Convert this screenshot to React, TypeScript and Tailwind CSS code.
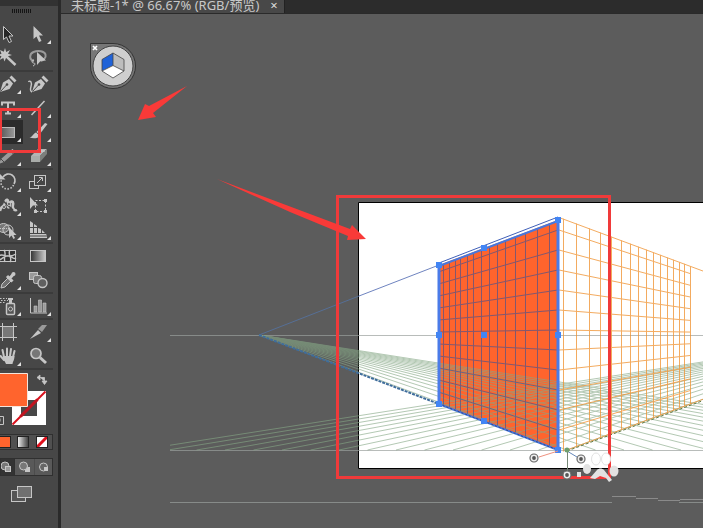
import { ReactNode } from "react"

interface Tool {
  name: string
  icon: ReactNode
  flyout?: boolean
  active?: boolean
}

const L = "#c6c6c6"
const M = "#9a9a9a"
const BG = "#474747"

// Every tool icon is drawn on a 30x24 grid
const toolGroups: Tool[][] = [
  [
    { name: "Selection", icon: <path d="M10.5 4.5v13l3-2.5 2.5 5.5 2.5-1-2.5-5.5h4z" fill="#262626" stroke={L} /> },
    { name: "Direct Selection", flyout: true, icon: <path d="M10.5 4v13l3-2.5 2.5 5.5 2.5-1-2.5-5.5h4z" fill={L} /> },
    {
      name: "Magic Wand",
      icon: (
        <>
          <path d="M12 2l1.200 4 3.800-2-2 3.800 4 1.200-4 1.200 1 3-3-1.200-1.500 3.500-1.200-3.500-3.800 2 2-3.800-3.500-1.200 3.500-1.200-1.500-3.800 3.800 1.800z" fill={L} />
          <path d="M14.5 11.5l8 7.5" stroke={L} strokeWidth="2.5" />
        </>
      ),
    },
    {
      name: "Lasso",
      icon: (
        <>
          <path d="M11 15c-5-1-5-7-.5-9 4.500-2 11-1 12 2.500 .8 3-2 5.500-5 6.500" fill="none" stroke={M} strokeWidth="2" />
          <path d="M11 14c-2.500 0-2.500 3-.5 3s2 2-.5 3" fill="none" stroke={L} />
          <path d="M14 6v13l3.500-4 5.500-.5z" fill={L} />
        </>
      ),
    },
  ],
  [
    {
      name: "Pen",
      flyout: true,
      icon: (
        <>
          <path d="M7 20l3-9.500 6-3.500 4 4.500-3.500 5.500z" fill={L} />
          <path d="M16.500 5.500l2-2 5 5-2 2z" fill={L} />
          <path d="M7.500 19.500l6-6.500" stroke={BG} />
          <circle cx="14" cy="12.500" r="1.300" fill={BG} />
        </>
      ),
    },
    {
      name: "Curvature",
      icon: (
        <>
          <path d="M9 20l3-9.500 6-3.500 4 4.500-3.500 5.500z" fill={L} />
          <path d="M18.500 5.500l2-2 5 5-2 2z" fill={L} />
          <path d="M9.500 19.500l6-6.500" stroke={BG} />
          <circle cx="16" cy="12.500" r="1.300" fill={BG} />
          <path d="M9 20c-4-2 1-7-1-10-.8-1.200-2-1.200-2.500 0" fill="none" stroke={L} strokeWidth="1.400" />
        </>
      ),
    },
    {
      name: "Type",
      flyout: true,
      icon: <path d="M9 9.500v-3h12v3M15 6.500v11M12 17.500h6" fill="none" stroke={L} strokeWidth="2" />,
    },
    { name: "Line Segment", flyout: true, icon: <path d="M8.500 19l13-14" stroke={L} strokeWidth="1.500" /> },
    {
      name: "Rectangle",
      flyout: true,
      active: true,
      icon: <rect x="6.500" y="7.500" width="15" height="10" fill="url(#toolShade)" stroke="#b9b9b9" />,
    },
    {
      name: "Paintbrush",
      flyout: true,
      icon: (
        <>
          <path d="M22 3l2.500 1-8 10.500-3-2.500z" fill={L} />
          <path d="M13 12.500l3.500 3c-1 3-6 3.500-10 2 3-.5 3.500-4 6.500-5z" fill={L} />
        </>
      ),
    },
    {
      name: "Pencil",
      flyout: true,
      icon: (
        <>
          <path d="M6 20l2-5 9-8 3 3-9 8z" fill={M} />
          <path d="M17.500 6.500l2-1.500 2.500 2.500-1.500 2z" fill={L} />
          <path d="M8 15l3 3" stroke={BG} />
        </>
      ),
    },
    {
      name: "Eraser",
      flyout: true,
      icon: (
        <>
          <path d="M8 12l7-7h9l-7 7z" fill="#b4b4b4" />
          <path d="M8 12h9v6H8z" fill="#a9aca9" />
          <path d="M17 12l7-7v5l-7 8z" fill="#7c7f7c" />
          <path d="M12 8l1-1h9" stroke="#d5d5d5" fill="none" />
        </>
      ),
    },
  ],
  [
    {
      name: "Rotate",
      flyout: true,
      icon: (
        <>
          <path d="M10 7a6.500 6.500 0 0 1 11 7" fill="none" stroke={L} strokeWidth="1.600" />
          <path d="M20.500 15a6.500 6.500 0 0 1-12-5" fill="none" stroke={L} strokeWidth="1.600" strokeDasharray="1.500 1.500" />
          <path d="M7 4v5.500h5.500z" fill={L} />
        </>
      ),
    },
    {
      name: "Scale",
      flyout: true,
      icon: (
        <>
          <rect x="6.500" y="11.500" width="9" height="7" fill="none" stroke={L} />
          <rect x="11.500" y="5.500" width="11" height="10" fill={BG} stroke={L} />
          <path d="M14 13l5-5M16 7.500h3.500V11" fill="none" stroke={L} />
        </>
      ),
    },
    {
      name: "Width",
      flyout: true,
      icon: (
        <>
          <path d="M7 17c1-6 4-3 5-8s4-4 3 1 2 4 2 0 4-3 3 1 2 6 4 5" fill="none" stroke={L} strokeWidth="2.500" />
          <path d="M8 5l12 11" stroke={BG} strokeWidth="1.500" />
          <circle cx="11" cy="13" r="1.500" fill={BG} stroke={L} />
          <circle cx="16" cy="10" r="1.500" fill={BG} stroke={L} />
        </>
      ),
    },
    {
      name: "Free Transform",
      icon: (
        <>
          <path d="M7 3v12l3-3.500h5z" fill={L} />
          <rect x="12.500" y="6.500" width="10" height="11" fill="none" stroke={L} strokeDasharray="2 1.500" />
          <path d="M11 16h3v3h-3zM21 5h3v3h-3zM21 16h3v3h-3z" fill={L} />
        </>
      ),
    },
    {
      name: "Shape Builder",
      flyout: true,
      icon: (
        <>
          <ellipse cx="10.500" cy="10" rx="5.500" ry="4.500" fill="#777" stroke={L} />
          <ellipse cx="15" cy="12" rx="5" ry="5" fill="none" stroke={L} />
          <path d="M7 10.500h9" stroke={L} strokeDasharray="1 1" />
          <path d="M16 9v11l2.500-2.500 2 3.500 1.500-1-1.500-3h3z" fill={L} />
        </>
      ),
    },
    {
      name: "Perspective Grid",
      flyout: true,
      icon: (
        <>
          <path d="M7 3l3 2v10H7zM11 6l3 2v7h-3zM15 10l3 1v4h-3zM19 12l3 3h-3z" fill={L} />
          <path d="M7 16h16l1 1.500H7zM7 18.500h17v1.500H7z" fill={L} />
          <path d="M7 9.500h8" stroke={BG} />
        </>
      ),
    },
  ],
  [
    {
      name: "Mesh",
      icon: (
        <>
          <rect x="6.500" y="6.500" width="16" height="11" fill="#333" stroke={L} />
          <path d="M6 12c4-4 7 4 17-2M11 6c3 4-1 8 1 12M17 6c-3 5 3 8 0 12M6 16c4-1 5-5 10-4s4 4 7 2" fill="none" stroke={L} strokeWidth="1.400" />
        </>
      ),
    },
    { name: "Gradient", icon: <rect x="7.500" y="6.500" width="15" height="11" fill="url(#toolGradient)" stroke={L} /> },
    {
      name: "Eyedropper",
      flyout: true,
      icon: (
        <>
          <path d="M8 20l1-4 7-7 3 3-7 7z" fill="#707070" stroke={L} />
          <path d="M14 8l5.500 5.500M17 10l3.500-4" stroke={L} strokeWidth="3" />
          <circle cx="20.500" cy="6" r="2" fill={L} />
        </>
      ),
    },
    {
      name: "Blend",
      icon: (
        <>
          <rect x="6.500" y="4.500" width="8" height="7" fill={M} stroke={L} />
          <rect x="10.500" y="7.500" width="8" height="8" rx="2" fill="#777" stroke={L} />
          <circle cx="19.500" cy="15" r="4.500" fill="#606060" stroke={L} strokeWidth="1.400" />
        </>
      ),
    },
  ],
  [
    {
      name: "Symbol Sprayer",
      flyout: true,
      icon: (
        <>
          <rect x="13.500" y="9.500" width="8" height="11" rx="1" fill="#555" stroke={L} strokeWidth="1.500" />
          <path d="M15 4h5v2h-1v3h-3V6h-1z" fill={L} />
          <circle cx="17.500" cy="15" r="2" fill="none" stroke={L} />
          <path d="M7 4.500h7M8 6.500h7M7 8.500h5" stroke={L} strokeDasharray="1.500 1.500" />
        </>
      ),
    },
    {
      name: "Column Graph",
      flyout: true,
      icon: (
        <>
          <path d="M7.500 4v15H24" fill="none" stroke={L} />
          <path d="M11 12h3v6h-3zM15.500 6h3v12h-3zM20 9h3v9h-3z" fill={M} stroke={L} strokeWidth=".6" />
        </>
      ),
    },
  ],
  [
    {
      name: "Artboard",
      icon: (
        <>
          <rect x="9.500" y="6.500" width="11" height="11" fill="#787878" stroke={L} />
          <path d="M9.500 3v18M20.500 3v18M6 6.500h18M6 17.500h18" stroke={L} />
        </>
      ),
    },
    {
      name: "Slice",
      flyout: true,
      icon: (
        <>
          <path d="M7 19l8-9 3 3z" fill={L} />
          <path d="M15 9l4-4h5l-5 7z" fill={M} />
        </>
      ),
    },
    {
      name: "Hand",
      flyout: true,
      icon: (
        <>
          <path d="M11 13L9.500 6M14 12V4.500M17 12l1-7M20 13l1.500-6M11 16l-3.500-4" stroke={L} strokeWidth="2" strokeLinecap="round" />
          <path d="M10 12h11.500c0 4-1.500 5-2 8H13c-1-3-3-4-3-8z" fill={L} />
        </>
      ),
    },
    {
      name: "Zoom",
      icon: (
        <>
          <circle cx="13" cy="9.500" r="5" fill="#777" stroke={L} strokeWidth="1.700" />
          <path d="M17 13.500l6 5.500" stroke={L} strokeWidth="3" />
        </>
      ),
    },
  ],
]

function ToolButton({ tool }: { tool: Tool }) {
  return (
    <button type="button" aria-label={tool.name} title={tool.name} className={tool.active ? "h-6 bg-[#2b2b2b]" : "h-6"}>
      <svg width="30" height="24" viewBox="0 0 30 24" fill="none">
        {tool.icon}
        {tool.flyout && <path d="M28 18v4h-4z" fill="#e0e0e0" />}
      </svg>
    </button>
  )
}

function Swatches() {
  return (
    <svg width="54" height="60" viewBox="0 0 54 60" role="img" aria-label="Fill and stroke">
      <path d="M12 21h34v34H12zM21 30v16h16V30z" fill="#fff" fillRule="evenodd" />
      <path d="M12.500 54.500l33-33" stroke="#d8101c" strokeWidth="2" />
      <path d="M20.500 46.500l17-17" stroke="#c01520" strokeWidth="3" />
      <path d="M-2 3.500h29.500v33H-2z" fill="#ff642d" stroke="#f4e5dc" />
      <path d="M40 7.500h4.500v4M40 5v5l-3-2.500zM42 11h5l-2.500 3.500z" fill={L} stroke={L} strokeWidth=".8" />
      <path d="M-4 46.500h7.500v8H-4M-4 51.500h4v-3h-4" fill="none" stroke={L} />
    </svg>
  )
}

function ModeButton({ label, pressed, children }: { label: string; pressed?: boolean; children: ReactNode }) {
  return (
    <button
      type="button"
      aria-label={label}
      className={
        pressed
          ? "h-4 w-5 border-r border-[#303030] bg-[#333]"
          : "h-4 w-5 border-r border-[#4c4c4c] bg-[#595959]"
      }
    >
      <svg width="19" height="16" viewBox="0 0 19 16" fill="none">
        {children}
      </svg>
    </button>
  )
}

function Toolbox() {
  return (
    <aside className="relative w-[61px] shrink-0 overflow-hidden border-r-[3px] border-[#2a2a2a] bg-[#474747]">
      <div className="h-[6px] bg-[#323232]" />
      <div className="flex h-4 gap-px pt-[3px] pl-3">
        {Array.from({ length: 10 }, (_, i) => (
          <span key={i} className="h-1 w-px bg-[#151515]" />
        ))}
      </div>

      {toolGroups.map((group) => (
        <div key={group[0].name} className="mr-[5px] border-b-2 border-[#3b3b3b]">
          <div className="-ml-[7px] grid w-[60px] grid-cols-2">
            {group.map((tool) => (
              <ToolButton key={tool.name} tool={tool} />
            ))}
          </div>
        </div>
      ))}

      <Swatches />

      <div className="mt-1 mr-[5px] flex h-4 items-center border border-l-0 border-[#303030] bg-[#505050]">
        <button type="button" aria-label="Color" className="h-3 w-[11px] border border-l-0 border-[#222] bg-[#ff642d]" />
        <button
          type="button"
          aria-label="Gradient fill"
          className="ml-[6px] h-3 w-3 border border-[#222] bg-linear-to-r from-[#eee] to-[#444]"
        />
        <button type="button" aria-label="None" className="ml-[7px] h-3 w-3 border border-[#222] bg-white">
          <svg width="10" height="10" viewBox="0 0 10 10">
            <path d="M0 10L10 0" stroke="#e0101c" strokeWidth="3" />
          </svg>
        </button>
      </div>

      <div className="mt-2 mr-[5px] flex overflow-hidden border border-[#303030]">
        <div className="-ml-[6px] flex">
          <ModeButton label="Draw Normal" pressed>
            <circle cx="10" cy="7" r="4" fill="#777" stroke={L} />
            <rect x="10.500" y="7.500" width="5" height="5" fill={M} stroke={L} />
          </ModeButton>
          <ModeButton label="Draw Behind">
            <rect x="10" y="8" width="5" height="5" fill={L} />
            <circle cx="8.500" cy="7" r="4" fill="#777" stroke={L} />
          </ModeButton>
          <ModeButton label="Draw Inside">
            <circle cx="8.500" cy="8" r="4" fill="#666" stroke={L} />
            <path d="M9 8h4v4H9z" fill={L} />
          </ModeButton>
        </div>
      </div>

      <button type="button" aria-label="Change Screen Mode" className="mt-2 ml-[11px] block h-5">
        <svg width="22" height="18" viewBox="0 0 22 18">
          <rect x=".5" y="5.500" width="14" height="11" fill="#555" stroke={L} />
          <rect x="6.500" y="1.500" width="14" height="11" fill="#707070" stroke={L} />
        </svg>
      </button>

      <div className="pointer-events-none absolute top-[108px] -left-px h-[45px] w-[42px] border-[3px] border-[#f03a3a]" />
    </aside>
  )
}

const horizon = 335
const ground = 450
const leftVp = 259
const rightVp = 875
const wallLevels = [230, 250, 270, 290, 310, 330, 350, 370, 390, 410, 430]
const leftColumns = [443, 449, 455, 460, 467, 473, 481, 489, 497, 505, 515, 525, 537, 549]
const rightColumns = [563, 576, 589, 600, 611, 621, 630, 638, 646, 653, 660, 667, 673, 679, 684, 690]
const floorSteps = Array.from({ length: 16 }, (_, i) => i * 28.5)

// y of the ray that leaves a vanishing point and passes (x0, y0), taken at x
function rayY(vp: number, x0: number, y0: number, x: number) {
  return horizon + ((y0 - horizon) * (x - vp)) / (x0 - vp)
}

function FloorGrid() {
  return (
    <g stroke="#86a886" strokeWidth="1" opacity=".62">
      {floorSteps.map((step) => (
        <path key={step} d={`M${leftVp} ${horizon}L${567 + step} ${ground}M${rightVp} ${horizon}L${567 - step} ${ground}`} />
      ))}
    </g>
  )
}

function WallGrids() {
  return (
    <>
      <g stroke="#33509a" strokeWidth="1" opacity=".6">
        {leftColumns.map((x) => (
          <path key={x} d={`M${x + 0.5} ${rayY(leftVp, 558, 220, x)}V${rayY(leftVp, 558, 450, x)}`} />
        ))}
        {wallLevels.map((y) => (
          <path key={y} d={`M558 ${y}L439 ${rayY(leftVp, 558, y, 439)}`} />
        ))}
      </g>
      <g stroke="#f0902c" strokeWidth="1" opacity=".75">
        {rightColumns.map((x) => (
          <path key={x} d={`M${x + 0.5} ${rayY(rightVp, 561, 218, x)}V${rayY(rightVp, 567, 450, x)}`} />
        ))}
        {wallLevels.map((y) => (
          <path key={y} d={`M559 ${y}L691 ${rayY(rightVp, 559, y, 691)}`} />
        ))}
        <path d="M559 217.500L875 335M567 450L875 335" />
      </g>
    </>
  )
}

function Handle({ x, y }: { x: number; y: number }) {
  return (
    <g>
      <circle cx={x} cy={y} r="4" fill="#eee" stroke="#666" strokeWidth="1.200" />
      <circle cx={x} cy={y} r="1.900" fill="#555" />
    </g>
  )
}

const anchors = [
  [439, 265], [484, 248], [558, 220],
  [439, 335], [484, 335], [558, 335],
  [439, 404], [484, 421], [558, 450],
]

function Artwork() {
  return (
    <svg width="642" height="514" viewBox="61 14 642 514" fill="none" className="block shrink-0" role="img" aria-label="Perspective grid drawing">
      <clipPath id="floorClip">
        <path d="M170 330h540v121H170z" />
      </clipPath>
      <path d="M358.500 202.500H710v266H358.500z" fill="#fff" stroke="#000" />

      <path d="M170 335.500h540M170 450.500h540M170 502.500h442M679 502.500h30" stroke="#9a9f9c" opacity=".7" />
      <path d="M612 496.500h24M636 498.500h22M658 500.500h22M680 499.500h23" stroke="#8a8a8a" />

      <path d="M439 265L558 220v230L439 404z" fill="#ff642d" />
      <g clipPath="url(#floorClip)">
        <FloorGrid />
      </g>
      <WallGrids />

      <path d="M259 335L359 296" stroke="#566f96" />
      <path d="M359 296L439 265" stroke="#6f84c0" />
      <path d="M259 335L439 404" stroke="#3f6d9c" strokeWidth="2" strokeDasharray="3 1" />
      <path d="M439 263L558 217" stroke="#3f5fb8" />
      <path d="M439 266L558 221M439 404L558 450" stroke="#4777dd" strokeWidth="2" />
      <path d="M439 404L558 450" stroke="#334a88" strokeDasharray="2 2" />
      <path d="M439 265V404M558 220V450" stroke="#4b7be8" strokeWidth="3" />
      <path d="M567 451L710 398" stroke="#5f7a45" strokeDasharray="3 2" />
      {anchors.map(([x, y]) => (
        <rect key={`${x}-${y}`} x={x - 3} y={y - 3} width="6" height="6" fill="#4285f4" />
      ))}

      <path d="M539 457L558 451" stroke="#ee9280" />
      <path d="M567 451L577 457" stroke="#6688bb" />
      <path d="M567.500 452V471" stroke="#778877" />
      <circle cx="567" cy="450" r="2.500" fill="#6f9f6f" />

      {/* annotation frame and arrows */}
      <path d="M337.500 196.500h272v281h-272z" stroke="#f03a3a" strokeWidth="3" />
      <path d="M187 86L149 106L145 104L138 120L156 117L153 113z" fill="#f93a38" />
      <path d="M217 179L350 229L352 225L366 239L347 240L348 236L290 212z" fill="#f93a38" />

      <Handle x={534} y={458} />
      <Handle x={581} y={459} />
      <Handle x={567} y={475} />
      <g fill="#e2e2e2">
        <ellipse cx="596" cy="459" rx="4.500" ry="6" fill="#fff" stroke="#e2e2e2" />
        <ellipse cx="606" cy="459" rx="4.500" ry="6" fill="#fff" stroke="#e2e2e2" />
        <ellipse cx="587" cy="469" rx="4" ry="5" />
        <ellipse cx="614" cy="471" rx="4.500" ry="5.500" />
        <path d="M590 478l7-8c2-2 5-2 7 0l8 10-3 2-3-4-6-2-5 3z" />
        <rect x="577" y="472" width="4" height="5" />
      </g>

      {/* plane switching widget */}
      <path d="M90.500 43.500H113A22.500 22.500 0 1 1 90.500 66z" fill="#777" stroke="#333" />
      <circle cx="113" cy="66" r="20" fill="#cfcfcf" stroke="#404040" />
      <path d="M102 59.500L113 53v12.500L102 71z" fill="#1f62d8" />
      <path d="M113 53l11 6.500V71l-11-5.500z" fill="#bdbdbd" />
      <path d="M102 71l11-5.500L124 71l-11 7z" fill="#fff" />
      <path d="M113 53l11 6.500V71l-11 7-11-7V59.500zM113 53v12.500L102 71M113 65.500L124 71" stroke="#444" strokeWidth=".8" />
      <path d="M93 46l4 4M97 46l-4 4" stroke="#fff" strokeWidth="1.700" />
    </svg>
  )
}

export default function App() {
  return (
    <div className="flex min-h-screen overflow-hidden bg-[#5c5c5c] font-['Noto_Sans','Noto_Sans_CJK_SC',sans-serif]">
      <svg width="0" height="0" className="absolute" aria-hidden="true">
        <linearGradient id="toolShade">
          <stop stopColor="#555" />
          <stop offset="1" stopColor="#999" />
        </linearGradient>
        <linearGradient id="toolGradient">
          <stop stopColor="#333" />
          <stop offset="1" stopColor="#ccc" />
        </linearGradient>
      </svg>
      <Toolbox />
      <div className="flex min-w-0 flex-1 flex-col overflow-hidden">
        <header className="flex h-[14px] border-b border-[#2a2a2a] bg-[#2c2c2c]">
          <div className="flex w-[224px] items-start justify-between border-r border-[#222] bg-[#484848] pr-1 pl-[10px] text-[13px] leading-[10px] whitespace-nowrap text-[#c8c8c8]">
            <h1>未标题-1* @ 66.67% (RGB/预览)</h1>
            <button type="button" aria-label="Close document" className="w-3 text-[#ddd]">
              ×
            </button>
          </div>
        </header>
        <main className="flex-1 overflow-hidden">
          <Artwork />
        </main>
      </div>
    </div>
  )
}
